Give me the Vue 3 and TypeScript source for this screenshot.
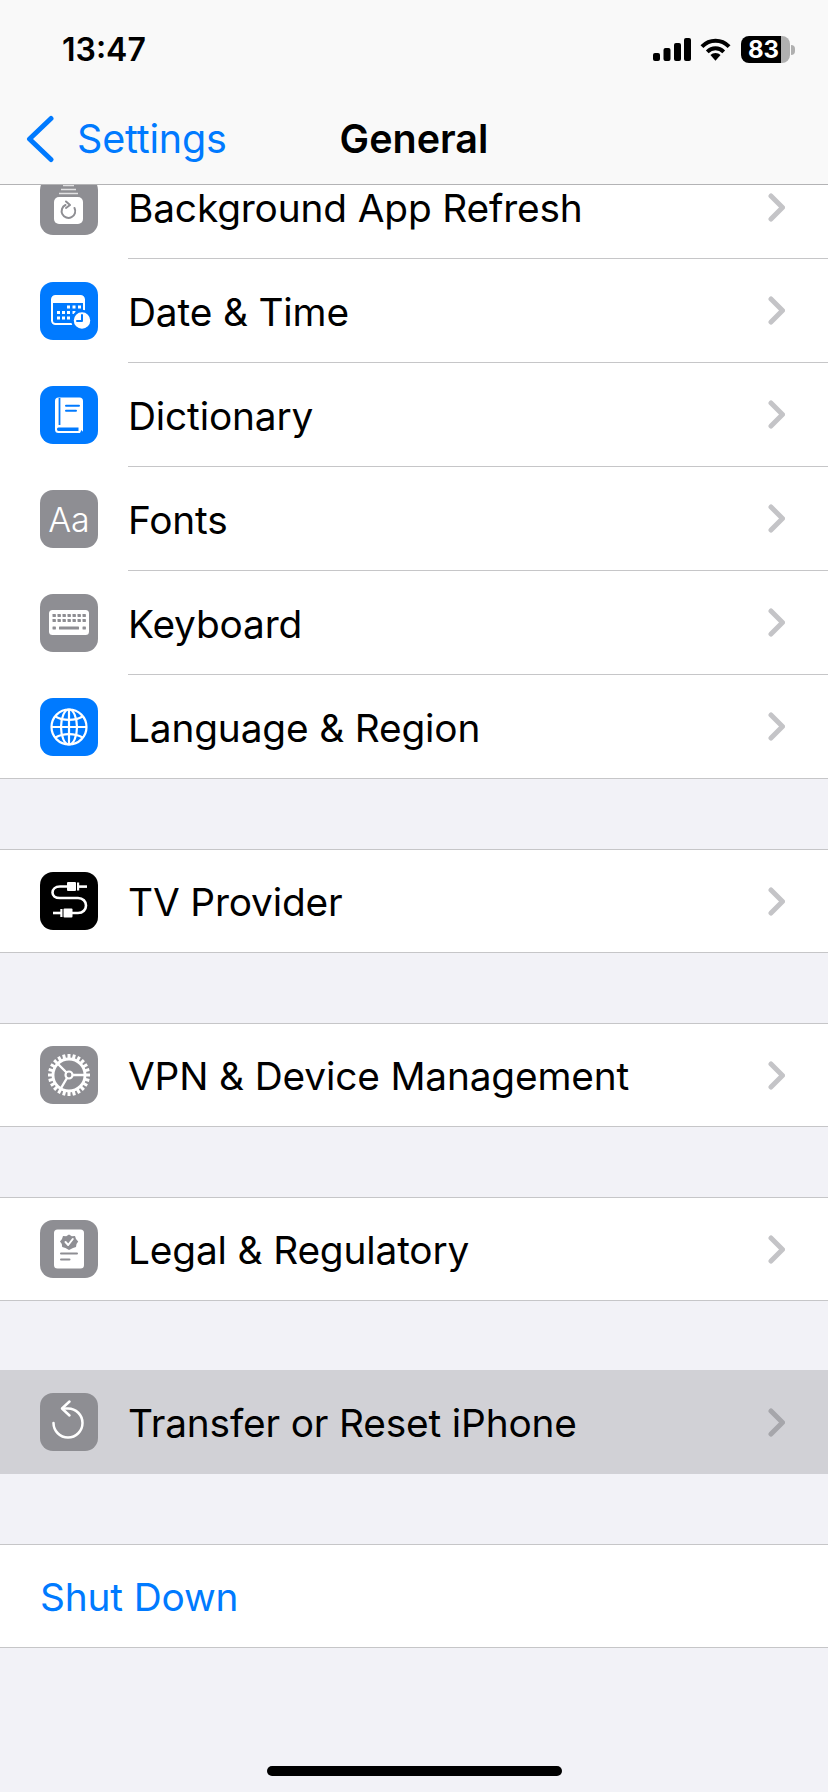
<script setup lang="ts">
interface Row {
  label: string
  icon: string
  bg: string
  pressed?: boolean
}

const groups: Row[][] = [
  [
    { label: 'Background App Refresh', icon: 'refresh', bg: '#8e8e93' },
    { label: 'Date & Time', icon: 'date', bg: '#007aff' },
    { label: 'Dictionary', icon: 'book', bg: '#007aff' },
    { label: 'Fonts', icon: 'fonts', bg: '#8e8e93' },
    { label: 'Keyboard', icon: 'keyboard', bg: '#8e8e93' },
    { label: 'Language & Region', icon: 'globe', bg: '#007aff' }
  ],
  [{ label: 'TV Provider', icon: 'tv', bg: '#000000' }],
  [{ label: 'VPN & Device Management', icon: 'gear', bg: '#8e8e93' }],
  [{ label: 'Legal & Regulatory', icon: 'legal', bg: '#8e8e93' }],
  [{ label: 'Transfer or Reset iPhone', icon: 'reset', bg: '#8e8e93', pressed: true }]
]

const gearTeeth = Array.from({ length: 24 }, (_, i) => i * 15)
const kbKeys = [12.5, 17.5, 22.5, 27.5, 32.5, 37.5, 42.5]
</script>

<template>
  <div class="screen">
    <header class="top">
      <div class="status">
        <span class="time">13:47</span>
        <div class="status-icons">
          <svg class="signal" width="38" height="23" viewBox="0 0 38 23">
            <rect x="0" y="15" width="7" height="8" rx="2" />
            <rect x="10.500" y="10" width="7" height="13" rx="2" />
            <rect x="21" y="5" width="7" height="18" rx="2" />
            <rect x="31" y="0" width="7" height="23" rx="2" />
          </svg>
          <svg class="wifi" width="31" height="24" viewBox="0 0 32 24">
            <path d="M2 9.500C10 1.500 22 1.500 30 9.500" fill="none" stroke="#000" stroke-width="4.200" />
            <path d="M7.500 15C12.500 10 19.500 10 24.500 15" fill="none" stroke="#000" stroke-width="4" />
            <path d="M10.800 18.300C13.500 15.400 18.500 15.400 21.200 18.300L16 24Z" fill="#000" />
          </svg>
          <div class="battery">
            <div class="battery-body"><span>83</span></div>
            <div class="battery-cap"></div>
          </div>
        </div>
      </div>
      <nav class="nav">
        <div class="back">
          <svg width="30" height="48" viewBox="0 0 30 48">
            <path d="M26 3.500L4.500 24L26 44.500" fill="none" stroke="#007aff" stroke-width="5" stroke-linecap="round" stroke-linejoin="round" />
          </svg>
          <span>Settings</span>
        </div>
        <h1>General</h1>
        <div></div>
      </nav>
    </header>

    <main class="scroller">
      <div class="list">
        <section v-for="(group, g) in groups" :key="g" class="group" :class="{ 'pressed-group': group[0].pressed }">
          <div v-for="row in group" :key="row.label" class="row">
            <div class="icon" :style="{ background: row.bg }">
              <svg v-if="row.icon === 'refresh'" width="58" height="58" viewBox="0 0 58 58">
                <rect x="14" y="20" width="29" height="27" rx="5" fill="#fff" />
                <path d="M19 16.500H38" stroke="#fff" stroke-width="1.500" opacity=".75" />
                <path d="M21 12.500H36" stroke="#fff" stroke-width="1.500" opacity=".75" />
                <path d="M23 8.500H34" stroke="#fff" stroke-width="1.500" opacity=".75" />
                <path d="M25.500 28A6.800 6.800 0 1 0 34.500 31" fill="none" stroke="#8e8e93" stroke-width="2" stroke-linecap="round" />
                <path d="M26 24.500L30 28L26 31" fill="none" stroke="#8e8e93" stroke-width="2" stroke-linecap="round" stroke-linejoin="round" />
              </svg>

              <svg v-else-if="row.icon === 'date'" width="58" height="58" viewBox="0 0 58 58">
                <rect x="12" y="14" width="32" height="28" rx="3.500" fill="none" stroke="#fff" stroke-width="2" />
                <path d="M12 17.500A3.500 3.500 0 0 1 15.500 14H40.500A3.500 3.500 0 0 1 44 17.500V21H12Z" fill="#fff" />
                <g fill="#fff">
                  <rect x="27" y="23.500" width="3" height="3" /><rect x="32.500" y="23.500" width="3" height="3" /><rect x="38" y="23.500" width="3" height="3" />
                  <rect x="17" y="29" width="3" height="3" /><rect x="22" y="29" width="3" height="3" /><rect x="27" y="29" width="3" height="3" /><rect x="32.500" y="29" width="3" height="3" />
                  <rect x="17" y="34.500" width="3" height="3" /><rect x="22" y="34.500" width="3" height="3" /><rect x="27" y="34.500" width="3" height="3" />
                </g>
                <circle cx="42" cy="38.500" r="9.500" fill="#fff" stroke="#007aff" stroke-width="2.500" />
                <path d="M42 33V39H37" fill="none" stroke="#007aff" stroke-width="2" stroke-linecap="round" stroke-linejoin="round" />
              </svg>

              <svg v-else-if="row.icon === 'book'" width="58" height="58" viewBox="0 0 58 58">
                <path d="M15 15A3.500 3.500 0 0 1 18.500 11.500H39.500A3.500 3.500 0 0 1 43 15V47H18.500A3.500 3.500 0 0 1 15 43.500Z" fill="#fff" />
                <path d="M19.500 12V39" stroke="#007aff" stroke-width="1.800" />
                <path d="M26 19.700H39M26 24.700H36" stroke="#007aff" stroke-width="2" stroke-linecap="round" />
                <path d="M18.500 41.500H38.500V45H18.500C16.500 45 16.500 41.500 18.500 41.500Z" fill="#007aff" />
                <path d="M40 47H44L41.500 44Z" fill="#007aff" />
              </svg>

              <span v-else-if="row.icon === 'fonts'" class="aa">Aa</span>

              <svg v-else-if="row.icon === 'keyboard'" width="58" height="58" viewBox="0 0 58 58">
                <rect x="9" y="16" width="40" height="25" rx="3.500" fill="#fff" />
                <g fill="#8e8e93">
                  <rect v-for="x in kbKeys" :key="'a' + x" :x="x" y="20" width="3.400" height="3" rx=".4" />
                  <rect v-for="x in kbKeys" :key="'b' + x" :x="x" y="25" width="3.400" height="3" rx=".4" />
                  <rect x="12.500" y="32.500" width="3.400" height="3" rx=".4" />
                  <rect x="19" y="32.500" width="20" height="3" rx=".6" />
                  <rect x="42.500" y="32.500" width="3.400" height="3" rx=".4" />
                </g>
              </svg>

              <svg v-else-if="row.icon === 'globe'" width="58" height="58" viewBox="0 0 58 58">
                <g fill="none" stroke="#fff" stroke-width="2.200">
                  <circle cx="29" cy="29" r="17.500" />
                  <ellipse cx="29" cy="29" rx="8" ry="17.500" />
                  <path d="M29 11.500V46.500M11.500 29H46.500" />
                  <path d="M15.500 18.500C23 23 35 23 42.500 18.500M15.500 39.500C23 35 35 35 42.500 39.500" />
                </g>
              </svg>

              <svg v-else-if="row.icon === 'tv'" width="58" height="58" viewBox="0 0 58 58">
                <path d="M27 14.500H20C15 14.500 12.500 17.500 12.500 20.500C12.500 23.500 15 26 20 26H38C43 26 46 29.500 46 33.500C46 37.500 43 41 38 41H32" fill="none" stroke="#fff" stroke-width="2.600" />
                <rect x="27" y="10" width="9" height="9" rx="1" fill="#fff" />
                <rect x="37" y="10.500" width="2.200" height="8" fill="#fff" />
                <rect x="39" y="13.300" width="8" height="2.600" fill="#fff" />
                <rect x="23.500" y="36.500" width="9" height="9" rx="1" fill="#fff" />
                <rect x="20.300" y="37" width="2.200" height="8" fill="#fff" />
                <rect x="13" y="39.700" width="8" height="2.600" fill="#fff" />
              </svg>

              <svg v-else-if="row.icon === 'gear'" width="58" height="58" viewBox="0 0 58 58">
                <g fill="#fff">
                  <rect v-for="a in gearTeeth" :key="a" x="27.500" y="8" width="3" height="5" :transform="`rotate(${a} 29 29)`" />
                </g>
                <g fill="none" stroke="#fff">
                  <circle cx="29" cy="29" r="16" stroke-width="2.800" />
                  <circle cx="29" cy="29" r="3.500" stroke-width="2.200" />
                  <path d="M26.500 26.500L17.500 17.500M32.500 29H45M27 32L20.500 43" stroke-width="2.400" />
                </g>
              </svg>

              <svg v-else-if="row.icon === 'legal'" width="58" height="58" viewBox="0 0 58 58">
                <rect x="14" y="9.500" width="30" height="39" rx="3.500" fill="#fff" />
                <path d="M29 14.500L31.800 16.300L35 16L36 19L38.200 21.500L36.500 24L36 27L33 28L29 30L25.500 28L22.200 27L21.800 24L20 21.500L22 19L23 16L26.200 16.300Z" fill="#8e8e93" />
                <path d="M25.500 22L28.200 25L32.800 19" fill="none" stroke="#fff" stroke-width="2" stroke-linecap="round" stroke-linejoin="round" />
                <path d="M21 33.500H37M21 39.500H29.500" stroke="#8e8e93" stroke-width="2" stroke-linecap="round" />
              </svg>

              <svg v-else-if="row.icon === 'reset'" width="58" height="58" viewBox="0 0 58 58">
                <path d="M24 15.500H28A14.500 14.500 0 1 1 13.500 30" fill="none" stroke="#fff" stroke-width="2.500" stroke-linecap="round" />
                <path d="M29.500 8.500L22 15.500L29.500 22.500" fill="none" stroke="#fff" stroke-width="2.500" stroke-linecap="round" stroke-linejoin="round" />
              </svg>
            </div>
            <div class="row-main">
              <span class="label">{{ row.label }}</span>
              <svg class="chevron" width="17" height="29" viewBox="0 0 17 29">
                <path d="M3 3L14.500 14.500L3 26" fill="none" stroke="currentColor" stroke-width="5" stroke-linecap="round" stroke-linejoin="round" />
              </svg>
            </div>
          </div>
        </section>

        <section class="group">
          <div class="row plain"><span class="label link">Shut Down</span></div>
        </section>
      </div>
    </main>

    <div class="home-bar"></div>
  </div>
</template>

<style scoped>
.screen {
  position: relative;
  width: 828px;
  height: 1792px;
  overflow: hidden;
  display: flex;
  flex-direction: column;
  background: #f2f2f7;
  color: #000;
  font-family: Inter, "Liberation Sans", sans-serif;
}

.top {
  flex: none;
  box-sizing: border-box;
  height: 185px;
  background: #f9f9f9;
  border-bottom: 1px solid #b3b3b5;
  position: relative;
  z-index: 1;
}

.status {
  box-sizing: border-box;
  height: 100px;
  display: flex;
  align-items: flex-start;
  justify-content: space-between;
  padding: 30px 33px 0 62px;
}

.time {
  font-size: 32px;
  line-height: 40px;
  font-weight: 600;
}

.status-icons {
  display: flex;
  align-items: flex-start;
  padding-top: 7px;
  gap: 9px;
}

.signal {
  fill: #000;
  margin-top: 1px;
}

.wifi {
  margin-right: 1px;
}

.battery {
  display: flex;
  align-items: center;
  margin-top: -1px;
}

.battery-body {
  width: 49px;
  height: 27px;
  border-radius: 8px;
  background: linear-gradient(90deg, #000 0 40px, #b0b0b0 40px);
  color: #fff;
  font-size: 24px;
  line-height: 27px;
  font-weight: 700;
  padding-left: 7px;
  box-sizing: border-box;
}

.battery-cap {
  width: 4px;
  height: 10px;
  margin-left: 1px;
  border-radius: 0 5px 5px 0;
  background: #b0b0b0;
}

.nav {
  display: grid;
  grid-template-columns: 1fr auto 1fr;
  align-items: center;
  height: 78px;
  padding-left: 25px;
  padding-right: 25px;
}

.back {
  display: flex;
  align-items: center;
  gap: 22px;
  color: #007aff;
  font-size: 39.500px;
  letter-spacing: -0.2px;
}

.nav h1 {
  margin: 0;
  font-size: 39.500px;
  font-weight: 600;
}

.scroller {
  flex: 1;
  min-height: 0;
  overflow: hidden;
}

.list {
  margin-top: -30px;
  display: flex;
  flex-direction: column;
  gap: 70px;
}

.group {
  background: #fff;
  border-top: 1px solid #c6c6c8;
  border-bottom: 1px solid #c6c6c8;
}

.pressed-group {
  margin-top: -1px;
  background: #d1d1d6;
  border-color: #d1d1d6;
}

.pressed-group .chevron {
  color: #a6a6ab;
}

.row {
  display: flex;
  align-items: stretch;
  height: 104px;
  padding-left: 40px;
}

.row:first-child {
  height: 103px;
}

.row:last-child {
  height: 103px;
}

.row:only-child {
  height: 102px;
}

.row.plain {
  align-items: center;
}

.icon {
  flex: none;
  width: 58px;
  height: 58px;
  margin-top: 23px;
  border-radius: 13px;
  display: flex;
  align-items: center;
  justify-content: center;
}

.row:first-child .icon {
  margin-top: 21px;
}

.row:only-child .icon {
  margin-top: 22px;
}

.icon svg {
  display: block;
}

.aa {
  color: #fff;
  font-size: 34px;
  font-weight: 300;
}

.row-main {
  flex: 1;
  display: flex;
  align-items: center;
  justify-content: space-between;
  margin-left: 30px;
  padding-right: 43px;
  border-bottom: 1px solid #c6c6c8;
}

.row:last-child .row-main {
  border-bottom: none;
}

.label {
  font-size: 38.800px;
  letter-spacing: -0.15px;
  padding-top: 1px;
}

.link {
  color: #007aff;
}

.chevron {
  color: #c4c4c7;
}

.home-bar {
  position: absolute;
  left: 267px;
  bottom: 16px;
  width: 295px;
  height: 10px;
  border-radius: 5px;
  background: #000;
}
</style>

<style>
html,
body {
  margin: 0;
  background: #f2f2f7;
}
</style>
